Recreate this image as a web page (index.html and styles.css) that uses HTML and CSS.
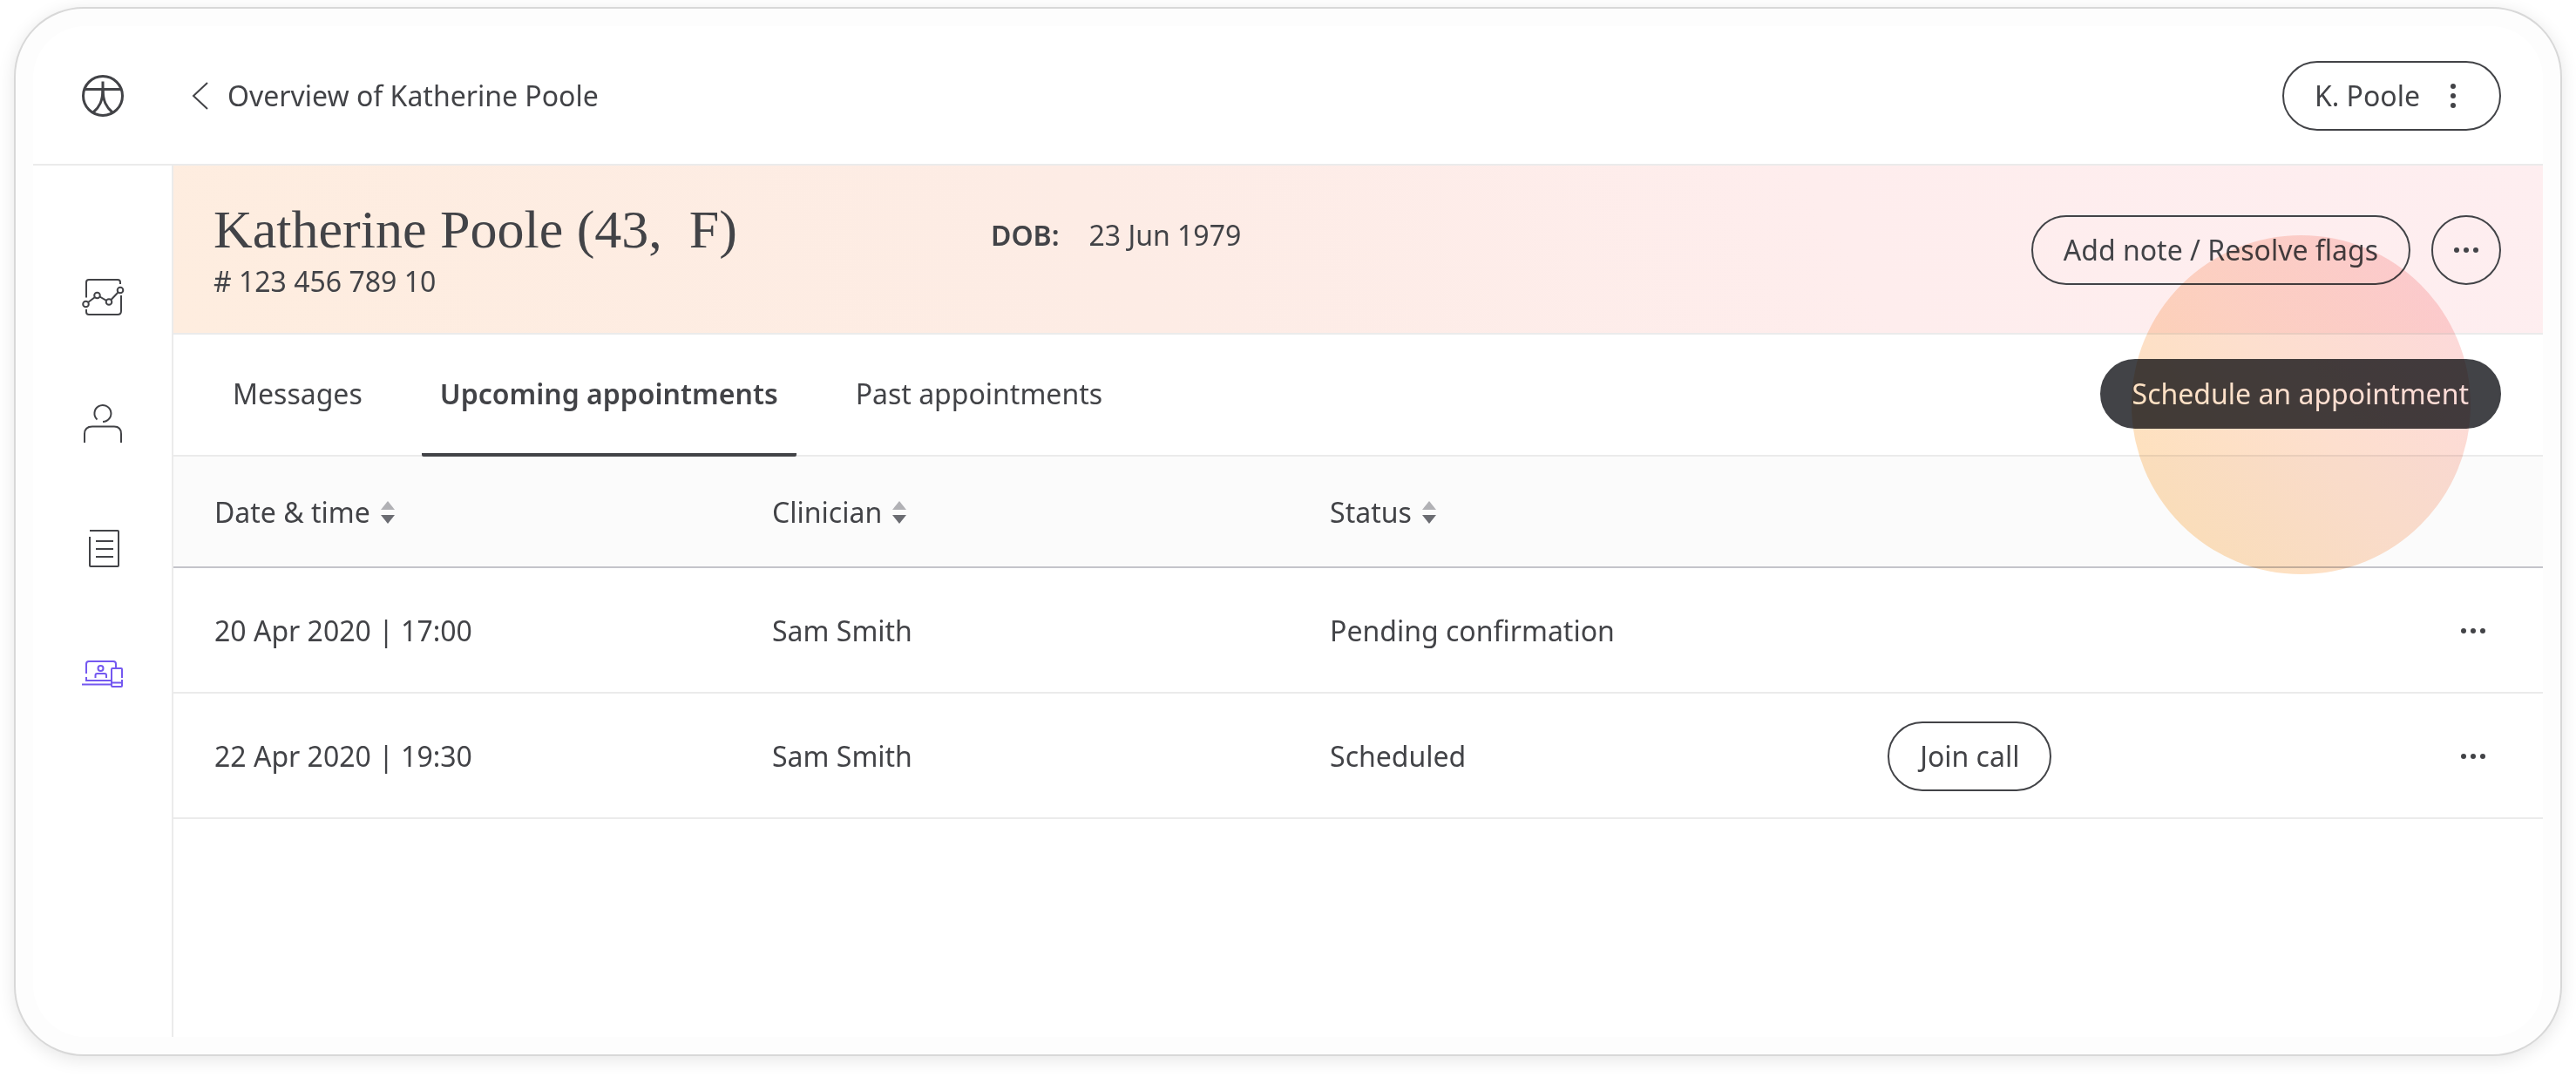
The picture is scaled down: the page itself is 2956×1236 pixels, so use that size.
FILE: index.html
```html
<!DOCTYPE html>
<html lang="en">
<head>
<meta charset="utf-8">
<meta name="viewport" content="width=device-width, initial-scale=1">
<title>Overview of Katherine Poole</title>
<link rel="stylesheet" href="styles.css">
</head>
<body>
<div class="frame">
  <div class="app">
    <header class="topbar">
      <a class="logo" href="#" aria-label="Home">
        <svg width="48" height="48" viewBox="0 0 48 48" fill="none" stroke="currentColor" stroke-width="3">
          <circle cx="24" cy="24" r="22.5"/>
          <path d="M3 16.500H45M24 7.500V24"/>
          <path d="M24 16C24 30 20 37 13 43M24 16C24 30 28 37 35 43"/>
        </svg>
      </a>
      <a class="back" href="#">
        <svg width="18" height="32" viewBox="0 0 18 32" fill="none" stroke="currentColor" stroke-width="2"><path d="M17 1L1 16L17 31"/></svg>
        Overview of Katherine Poole
      </a>
      <button class="btn btn-user" type="button">K. Poole
        <svg width="6" height="28" viewBox="0 0 6 28" fill="currentColor"><circle cx="3" cy="3" r="3"/><circle cx="3" cy="14" r="3"/><circle cx="3" cy="25" r="3"/></svg>
      </button>
    </header>
    <div class="body">
      <nav class="sidebar" aria-label="Main">
        <a href="#" aria-label="Charts">
          <svg width="48" height="48" viewBox="0 0 48 48" fill="none" stroke="currentColor" stroke-width="2">
            <path d="M5 24.500V7Q5 4 8 4H41Q44 4 44 7V9M45 22V40Q45 44 41 44H8Q5 44 5 41V38"/>
            <circle cx="4.500" cy="32" r="3.300"/><circle cx="17.500" cy="22" r="3.300"/><circle cx="31" cy="29.500" r="3.300"/><circle cx="44" cy="16" r="3.300"/>
            <path d="M7 30L15 24M20.500 23.500L28 27.800M33.500 27L41.500 18.500"/>
          </svg>
        </a>
        <a href="#" aria-label="Patient">
          <svg width="48" height="48" viewBox="0 0 48 48" fill="none" stroke="currentColor" stroke-width="2">
            <path d="M17.500 20.500A9.500 9.500 0 1 1 24 23"/>
            <path d="M3 47V37Q3 28.500 12 28.500H37Q45 28.500 45 37V47"/>
          </svg>
        </a>
        <a href="#" aria-label="Notes">
          <svg width="48" height="48" viewBox="0 0 48 48" fill="none" stroke="currentColor" stroke-width="2">
            <path d="M9 4H41Q42 4 42 5V44Q42 45 41 45H10Q9 45 9 44V11M16 16H36M16 25H36M16 34H36"/>
          </svg>
        </a>
        <a class="current" href="#" aria-label="Video calls" aria-current="page">
          <svg width="48" height="48" viewBox="0 0 48 48" fill="none" stroke="currentColor" stroke-width="2">
            <path d="M5 24V13Q5 10 8 10H36Q39 10 39 13V17M5 28V32H34M0 36.500H34"/>
            <circle cx="21.500" cy="18" r="3"/>
            <path d="M15.500 29V26Q15.500 24 17.500 24H26Q28 24 28 26V29"/>
            <path d="M46 29V19Q46 18 45 18H35Q34 18 34 19V38Q34 39 35 39H45Q46 39 46 38V31M34 34.500H46"/>
          </svg>
        </a>
      </nav>
      <main class="content">
        <section class="patient">
          <div class="identity">
            <h1>Katherine Poole (43,&nbsp; F)</h1>
            <p># 123 456 789 10</p>
          </div>
          <dl class="dob"><dt>DOB:</dt><dd>23 Jun 1979</dd></dl>
          <div class="actions">
            <button class="btn" type="button">Add note / Resolve flags</button>
            <button class="btn btn-round" type="button" aria-label="More actions">
              <svg width="28" height="6" viewBox="0 0 28 6" fill="currentColor"><circle cx="3" cy="3" r="3"/><circle cx="14" cy="3" r="3"/><circle cx="25" cy="3" r="3"/></svg>
            </button>
          </div>
        </section>
        <div class="tabbar">
          <nav class="tabs" aria-label="Appointments">
            <a href="#">Messages</a>
            <a class="active" href="#" aria-current="page">Upcoming appointments</a>
            <a href="#">Past appointments</a>
          </nav>
          <div class="schedule">
            <button class="btn btn-dark" type="button">Schedule an appointment</button>
            <span class="spot"></span>
          </div>
        </div>
        <table class="appointments">
          <colgroup><col class="col-data"><col class="col-data"><col class="col-data"><col class="col-call"><col></colgroup>
          <thead>
            <tr>
              <th scope="col"><button class="sort" type="button">Date &amp; time <svg width="16" height="26" viewBox="0 0 16 26"><path class="up" d="M8 0L16 10H0Z"/><path class="down" d="M0 16H16L8 26Z"/></svg></button></th>
              <th scope="col"><button class="sort" type="button">Clinician <svg width="16" height="26" viewBox="0 0 16 26"><path class="up" d="M8 0L16 10H0Z"/><path class="down" d="M0 16H16L8 26Z"/></svg></button></th>
              <th scope="col"><button class="sort" type="button">Status <svg width="16" height="26" viewBox="0 0 16 26"><path class="up" d="M8 0L16 10H0Z"/><path class="down" d="M0 16H16L8 26Z"/></svg></button></th>
              <td></td>
              <td></td>
            </tr>
          </thead>
          <tbody>
            <tr>
              <td>20 Apr 2020 | 17:00</td>
              <td>Sam Smith</td>
              <td>Pending confirmation</td>
              <td></td>
              <td class="more"><button class="dots" type="button" aria-label="More"><svg width="28" height="6" viewBox="0 0 28 6" fill="currentColor"><circle cx="3" cy="3" r="3"/><circle cx="14" cy="3" r="3"/><circle cx="25" cy="3" r="3"/></svg></button></td>
            </tr>
            <tr>
              <td>22 Apr 2020 | 19:30</td>
              <td>Sam Smith</td>
              <td>Scheduled</td>
              <td><button class="btn" type="button">Join call</button></td>
              <td class="more"><button class="dots" type="button" aria-label="More"><svg width="28" height="6" viewBox="0 0 28 6" fill="currentColor"><circle cx="3" cy="3" r="3"/><circle cx="14" cy="3" r="3"/><circle cx="25" cy="3" r="3"/></svg></button></td>
            </tr>
          </tbody>
        </table>
      </main>
    </div>
  </div>
</div>
</body>
</html>
```
FILE: styles.css
```css
* {
  box-sizing: border-box;
}

body {
  margin: 0;
  padding: 8px 16px 24px;
  min-height: 100vh;
  display: flex;
  background: #fff;
  color: #424347;
  font: 32px/44px "Noto Sans", sans-serif;
}

a {
  color: inherit;
  text-decoration: none;
}

svg {
  display: block;
  flex: none;
  overflow: visible;
}

h1,
p,
dl,
dd {
  margin: 0;
}

button {
  font: inherit;
  color: inherit;
  background: none;
  border: 0;
  padding: 0;
  cursor: pointer;
}

.frame {
  flex: 1;
  display: flex;
  padding: 20px;
  border: 2px solid #d8d8d8;
  border-radius: 80px;
  background: #fdfdfd;
  box-shadow: 0 4px 20px rgba(0, 0, 0, 0.1);
}

.app {
  flex: 1;
  display: flex;
  flex-direction: column;
  background: #fff;
  border-radius: 60px;
}

.topbar {
  display: flex;
  align-items: center;
  height: 160px;
  padding: 2px 48px 0 56px;
  border-bottom: 2px solid #ebebeb;
}

.logo {
  margin-right: 79px;
}

.back {
  display: flex;
  align-items: center;
  gap: 22px;
}

.btn {
  height: 80px;
  padding: 0 35px;
  border: 2px solid #424347;
  border-radius: 40px;
  white-space: nowrap;
}

.btn-user {
  display: flex;
  align-items: center;
  gap: 35px;
  margin-left: auto;
  padding-right: 50px;
}

.btn-round {
  width: 80px;
  padding: 0 24px;
}

.btn-dark {
  background: #424347;
  color: #fff;
}

.body {
  flex: 1;
  display: flex;
}

.sidebar {
  display: flex;
  flex-direction: column;
  align-items: center;
  gap: 96px;
  width: 161px;
  padding-top: 127px;
  border-right: 2px solid #ebebeb;
}

.sidebar .current {
  color: #7458f0;
}

.content {
  flex: 1;
  min-width: 0;
}

.patient {
  display: flex;
  align-items: center;
  height: 194px;
  padding: 2px 48px 0 46px;
  border-bottom: 2px solid #ebebeb;
  background: linear-gradient(60deg, #feeddf, #fdece5 40%, #feeded 70%, #feeef0);
}

.identity {
  width: 892px;
}

h1 {
  padding-bottom: 4px;
  font: 62px/68px "Liberation Serif", serif;
}

.dob {
  display: flex;
  gap: 34px;
  padding-bottom: 34px;
}

.dob dt {
  font-weight: 600;
}

.actions {
  display: flex;
  gap: 24px;
  margin-left: auto;
}

.tabbar {
  display: flex;
  justify-content: space-between;
  height: 140px;
  padding: 0 48px;
  border-bottom: 2px solid #ebebeb;
}

.tabs {
  display: flex;
  gap: 48px;
}

.tabs a {
  display: flex;
  align-items: center;
  height: 140px;
  padding: 0 20px;
  border-bottom: 4px solid transparent;
  border-radius: 2px;
}

.tabs .active {
  padding: 0 21px;
  font-weight: 600;
  border-color: #424347;
}

.schedule {
  position: relative;
  align-self: center;
  padding-bottom: 2px;
}

.spot {
  position: absolute;
  right: 35px;
  top: -142px;
  width: 389px;
  height: 389px;
  border-radius: 50%;
  background: linear-gradient(50deg, #fee2b6, #fddfce 50%, #fcd7de);
  mix-blend-mode: multiply;
  pointer-events: none;
}

.appointments {
  width: 100%;
  table-layout: fixed;
  border-collapse: separate;
  border-spacing: 0;
}

.col-data,
.col-call {
  width: 23.54%;
}

.appointments th,
.appointments td {
  height: 144px;
  padding: 2px 0 0 47px;
  border-bottom: 2px solid #ebebeb;
  text-align: left;
  font-weight: 400;
}

.appointments thead th,
.appointments thead td {
  height: 128px;
  background: #fbfbfb;
  border-color: #c4c4ca;
}

.sort {
  display: flex;
  align-items: center;
  gap: 12px;
}

.sort .up {
  fill: #b1b1b5;
}

.sort .down {
  fill: #6b6c72;
}

.appointments .more {
  padding: 2px 48px 0 0;
}

.dots {
  display: block;
  margin-left: auto;
  padding: 29px 18px;
}
```
